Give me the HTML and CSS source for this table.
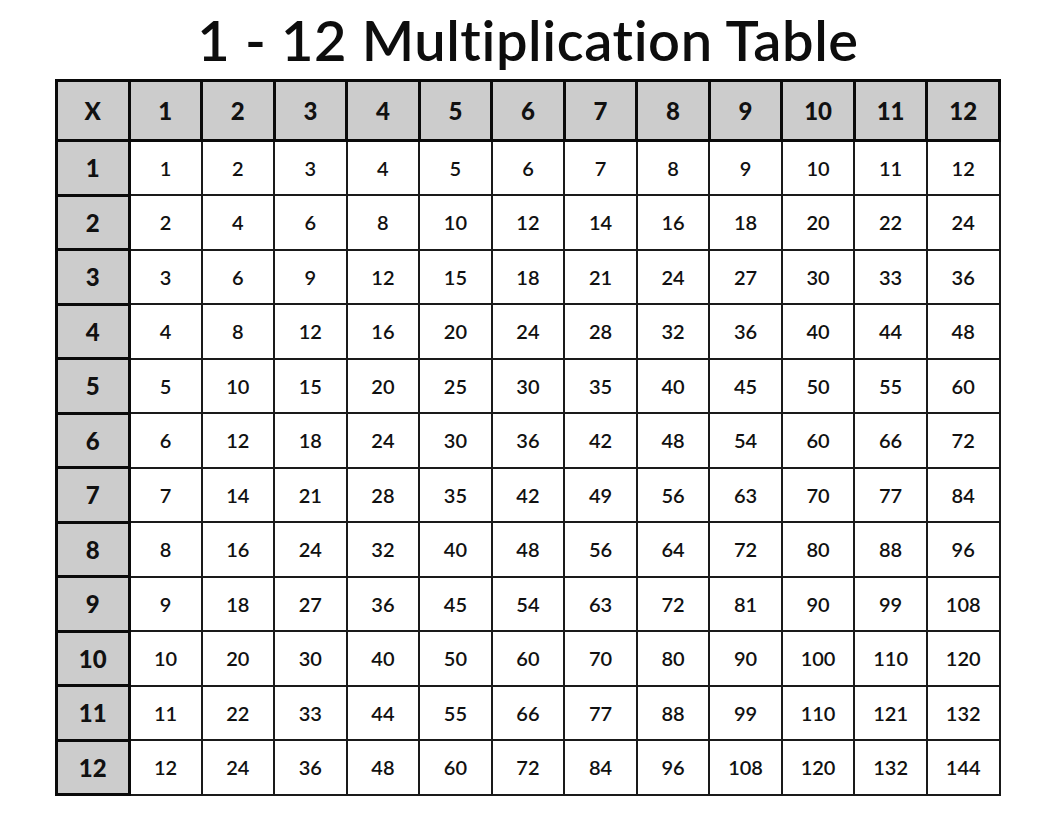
FILE: index.html
```html
<!DOCTYPE html>
<html lang="en">
<head>
<meta charset="utf-8">
<title>1 - 12 Multiplication Table</title>
<link rel="stylesheet" href="styles.css">
</head>
<body>
<main class="page">
<h1 class="title">1 - 12 Multiplication Table</h1>
<table class="grid">
<thead>
<tr><th class="corner">X</th><th>1</th><th>2</th><th>3</th><th>4</th><th>5</th><th>6</th><th>7</th><th>8</th><th>9</th><th>10</th><th>11</th><th>12</th></tr>
</thead>
<tbody>
<tr><th>1</th><td>1</td><td>2</td><td>3</td><td>4</td><td>5</td><td>6</td><td>7</td><td>8</td><td>9</td><td>10</td><td>11</td><td>12</td></tr>
<tr><th>2</th><td>2</td><td>4</td><td>6</td><td>8</td><td>10</td><td>12</td><td>14</td><td>16</td><td>18</td><td>20</td><td>22</td><td>24</td></tr>
<tr><th>3</th><td>3</td><td>6</td><td>9</td><td>12</td><td>15</td><td>18</td><td>21</td><td>24</td><td>27</td><td>30</td><td>33</td><td>36</td></tr>
<tr><th>4</th><td>4</td><td>8</td><td>12</td><td>16</td><td>20</td><td>24</td><td>28</td><td>32</td><td>36</td><td>40</td><td>44</td><td>48</td></tr>
<tr><th>5</th><td>5</td><td>10</td><td>15</td><td>20</td><td>25</td><td>30</td><td>35</td><td>40</td><td>45</td><td>50</td><td>55</td><td>60</td></tr>
<tr><th>6</th><td>6</td><td>12</td><td>18</td><td>24</td><td>30</td><td>36</td><td>42</td><td>48</td><td>54</td><td>60</td><td>66</td><td>72</td></tr>
<tr><th>7</th><td>7</td><td>14</td><td>21</td><td>28</td><td>35</td><td>42</td><td>49</td><td>56</td><td>63</td><td>70</td><td>77</td><td>84</td></tr>
<tr><th>8</th><td>8</td><td>16</td><td>24</td><td>32</td><td>40</td><td>48</td><td>56</td><td>64</td><td>72</td><td>80</td><td>88</td><td>96</td></tr>
<tr><th>9</th><td>9</td><td>18</td><td>27</td><td>36</td><td>45</td><td>54</td><td>63</td><td>72</td><td>81</td><td>90</td><td>99</td><td>108</td></tr>
<tr><th>10</th><td>10</td><td>20</td><td>30</td><td>40</td><td>50</td><td>60</td><td>70</td><td>80</td><td>90</td><td>100</td><td>110</td><td>120</td></tr>
<tr><th>11</th><td>11</td><td>22</td><td>33</td><td>44</td><td>55</td><td>66</td><td>77</td><td>88</td><td>99</td><td>110</td><td>121</td><td>132</td></tr>
<tr><th>12</th><td>12</td><td>24</td><td>36</td><td>48</td><td>60</td><td>72</td><td>84</td><td>96</td><td>108</td><td>120</td><td>132</td><td>144</td></tr>
</tbody>
</table>
</main>
</body>
</html>
```

FILE: styles.css
```css
html, body {
  margin: 0;
  padding: 0;
  background: #ffffff;
}

.page {
  display: flex;
  flex-direction: column;
  align-items: center;
  padding-top: 12px;
  font-family: "Lato", "Open Sans", sans-serif;
  color: #111111;
}

.title {
  margin: 0 0 11px 0;
  font-size: 56px;
  line-height: 56px;
  font-weight: 600;
  letter-spacing: 0.6px;
  color: #0d0d0d;
}

.grid {
  border-collapse: collapse;
  table-layout: fixed;
  width: 946px;
}

.grid th,
.grid td {
  text-align: center;
  vertical-align: middle;
  padding: 0;
}

.grid th {
  background: #cccccc;
  border: 3px solid #0a0a0a;
  font-size: 24px;
  font-weight: 900;
  color: #111111;
}

.grid thead th {
  height: 57px;
}

.grid td {
  border: 2px solid #1a1a1a;
  font-size: 20px;
  font-weight: 600;
  height: 51.5px;
}

.grid tbody th {
  height: 51.5px;
}
```
